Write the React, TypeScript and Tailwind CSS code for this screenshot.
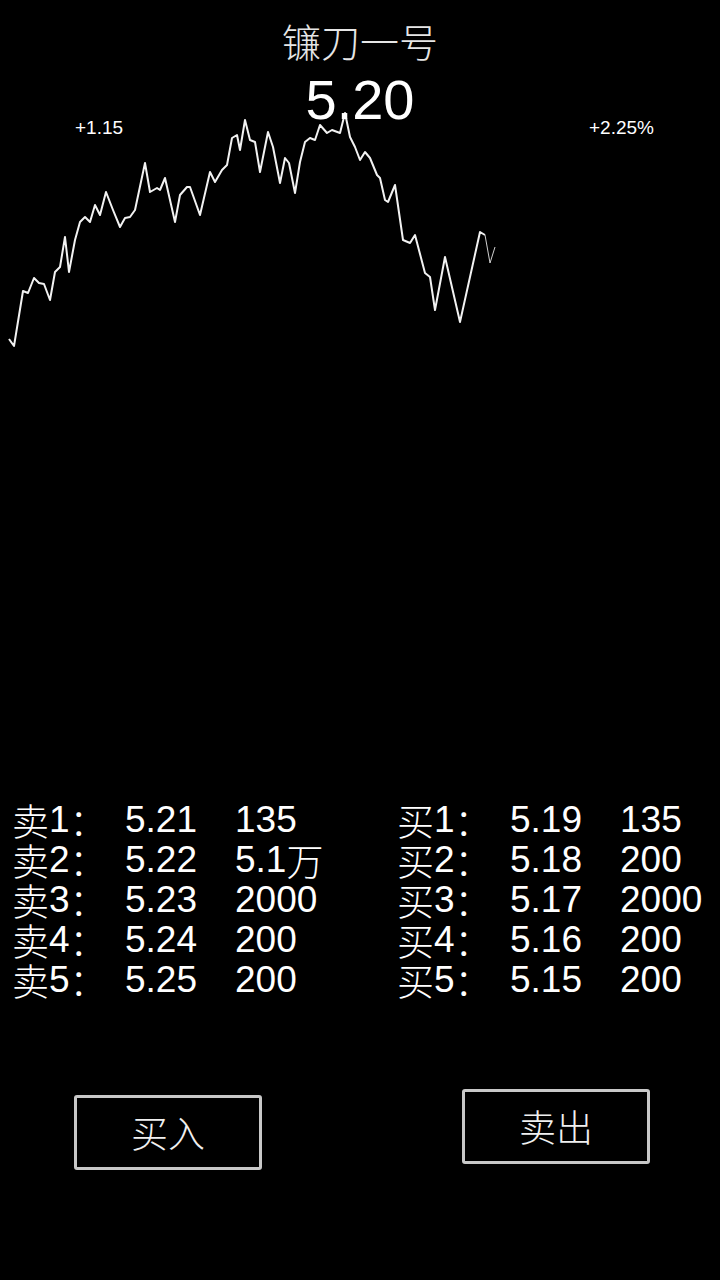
import React from "react";

const pts: [number, number][] = [
  [9, 339], [14, 346], [23, 291], [28, 293], [34, 278], [39, 283], [44, 284], [50, 300],
  [55, 272], [60, 267], [65, 237], [69, 272], [75, 240], [80, 222], [85, 217], [90, 222],
  [95, 205], [100, 215], [106, 192], [113, 210], [120, 227], [125, 218], [130, 217], [135, 210],
  [145, 163], [150, 192], [157, 188], [160, 190], [165, 178], [175, 222], [180, 195], [187, 187],
  [190, 187], [200, 215], [210, 172], [215, 182], [222, 170], [227, 165], [232, 138], [237, 135],
  [240, 150], [245, 120], [250, 140], [255, 142], [260, 172], [268, 132], [273, 147], [280, 183],
  [285, 158], [289, 163], [295, 193], [300, 162], [305, 142], [310, 138], [315, 140], [320, 125],
  [327, 133], [332, 130], [340, 133], [345, 113], [350, 137], [355, 147], [360, 160], [365, 152],
  [370, 158], [377, 175], [380, 178], [385, 200], [388, 202], [395, 185], [403, 240], [410, 243],
  [415, 235], [425, 273], [430, 277], [435, 310], [445, 257], [460, 322], [480, 232], [485, 235],
];
const tail: [number, number][] = [[485, 235], [490, 263], [495, 247]];

const toStr = (p: [number, number][]) => p.map((q) => q.join(",")).join(" ");

const asks = [
  ["卖", "1", "5.21", "135"],
  ["卖", "2", "5.22", "5.1万"],
  ["卖", "3", "5.23", "2000"],
  ["卖", "4", "5.24", "200"],
  ["卖", "5", "5.25", "200"],
];
const bids = [
  ["买", "1", "5.19", "135"],
  ["买", "2", "5.18", "200"],
  ["买", "3", "5.17", "2000"],
  ["买", "4", "5.16", "200"],
  ["买", "5", "5.15", "200"],
];

const sans = { fontFamily: '"Liberation Sans", "Noto Sans CJK SC", sans-serif' };
const cjk = { fontFamily: '"Noto Sans CJK SC", sans-serif' };

function Row({ r }: { r: string[] }) {
  return (
    <div className="flex h-[40px] items-center text-[37px] leading-[40px] text-white">
      <span className="flex w-[113px] h-[40px] items-center whitespace-nowrap">
        <span className="font-light" style={cjk}>{r[0]}</span>
        <span>{r[1]}</span>
        <span className="font-light" style={cjk}>：</span>
      </span>
      <span className="w-[110px]">{r[2]}</span>
      <span className="flex h-[40px] items-center whitespace-nowrap">
        {r[3].endsWith("万") ? (
          <>
            <span>{r[3].slice(0, -1)}</span>
            <span className="font-light" style={cjk}>万</span>
          </>
        ) : (
          <span>{r[3]}</span>
        )}
      </span>
    </div>
  );
}

export default function App() {
  return (
    <div className="w-[720px] h-[1280px] bg-black overflow-hidden" style={sans}>
      <div className="relative h-[800px]">
        <svg className="absolute inset-0" width="720" height="800" viewBox="0 0 720 800">
          <polyline points={toStr(pts)} fill="none" stroke="#f2f2f2" strokeWidth="2" strokeLinejoin="round" />
          <polyline points={toStr(tail)} fill="none" stroke="#cfcfcf" strokeWidth="1" strokeLinejoin="round" />
        </svg>
        <div className="relative flex flex-col items-center">
          <div className="mt-[18px] h-[44px] text-[39px] leading-[44px] font-light text-[#e6e6e6]" style={cjk}>
            镰刀一号
          </div>
          <div className="mt-[3px] h-[70px] text-[56px] leading-[70px] text-white">5.20</div>
        </div>
        <div className="relative flex h-[20px] -mt-[17px] text-[19px] leading-[20px] text-white">
          <span className="ml-[75px]">+1.15</span>
          <span className="ml-auto mr-[66px]">+2.25%</span>
        </div>
      </div>
      <div className="grid grid-cols-[385px_1fr] pl-[12px]">
        <div>
          {asks.map((r) => (
            <Row key={r[0] + r[1]} r={r} />
          ))}
        </div>
        <div>
          {bids.map((r) => (
            <Row key={r[0] + r[1]} r={r} />
          ))}
        </div>
      </div>
      <div className="flex items-start">
        <button
          className="ml-[74px] mt-[95px] flex h-[75px] w-[188px] items-center justify-center rounded-[3px] border-[3px] border-[#c8c8c8] text-[37px] font-light text-[#f0f0f0]"
          style={cjk}
        >
          买入
        </button>
        <button
          className="ml-[200px] mt-[89px] flex h-[75px] w-[188px] items-center justify-center rounded-[3px] border-[3px] border-[#c8c8c8] text-[37px] font-light text-[#f0f0f0]"
          style={cjk}
        >
          卖出
        </button>
      </div>
    </div>
  );
}
